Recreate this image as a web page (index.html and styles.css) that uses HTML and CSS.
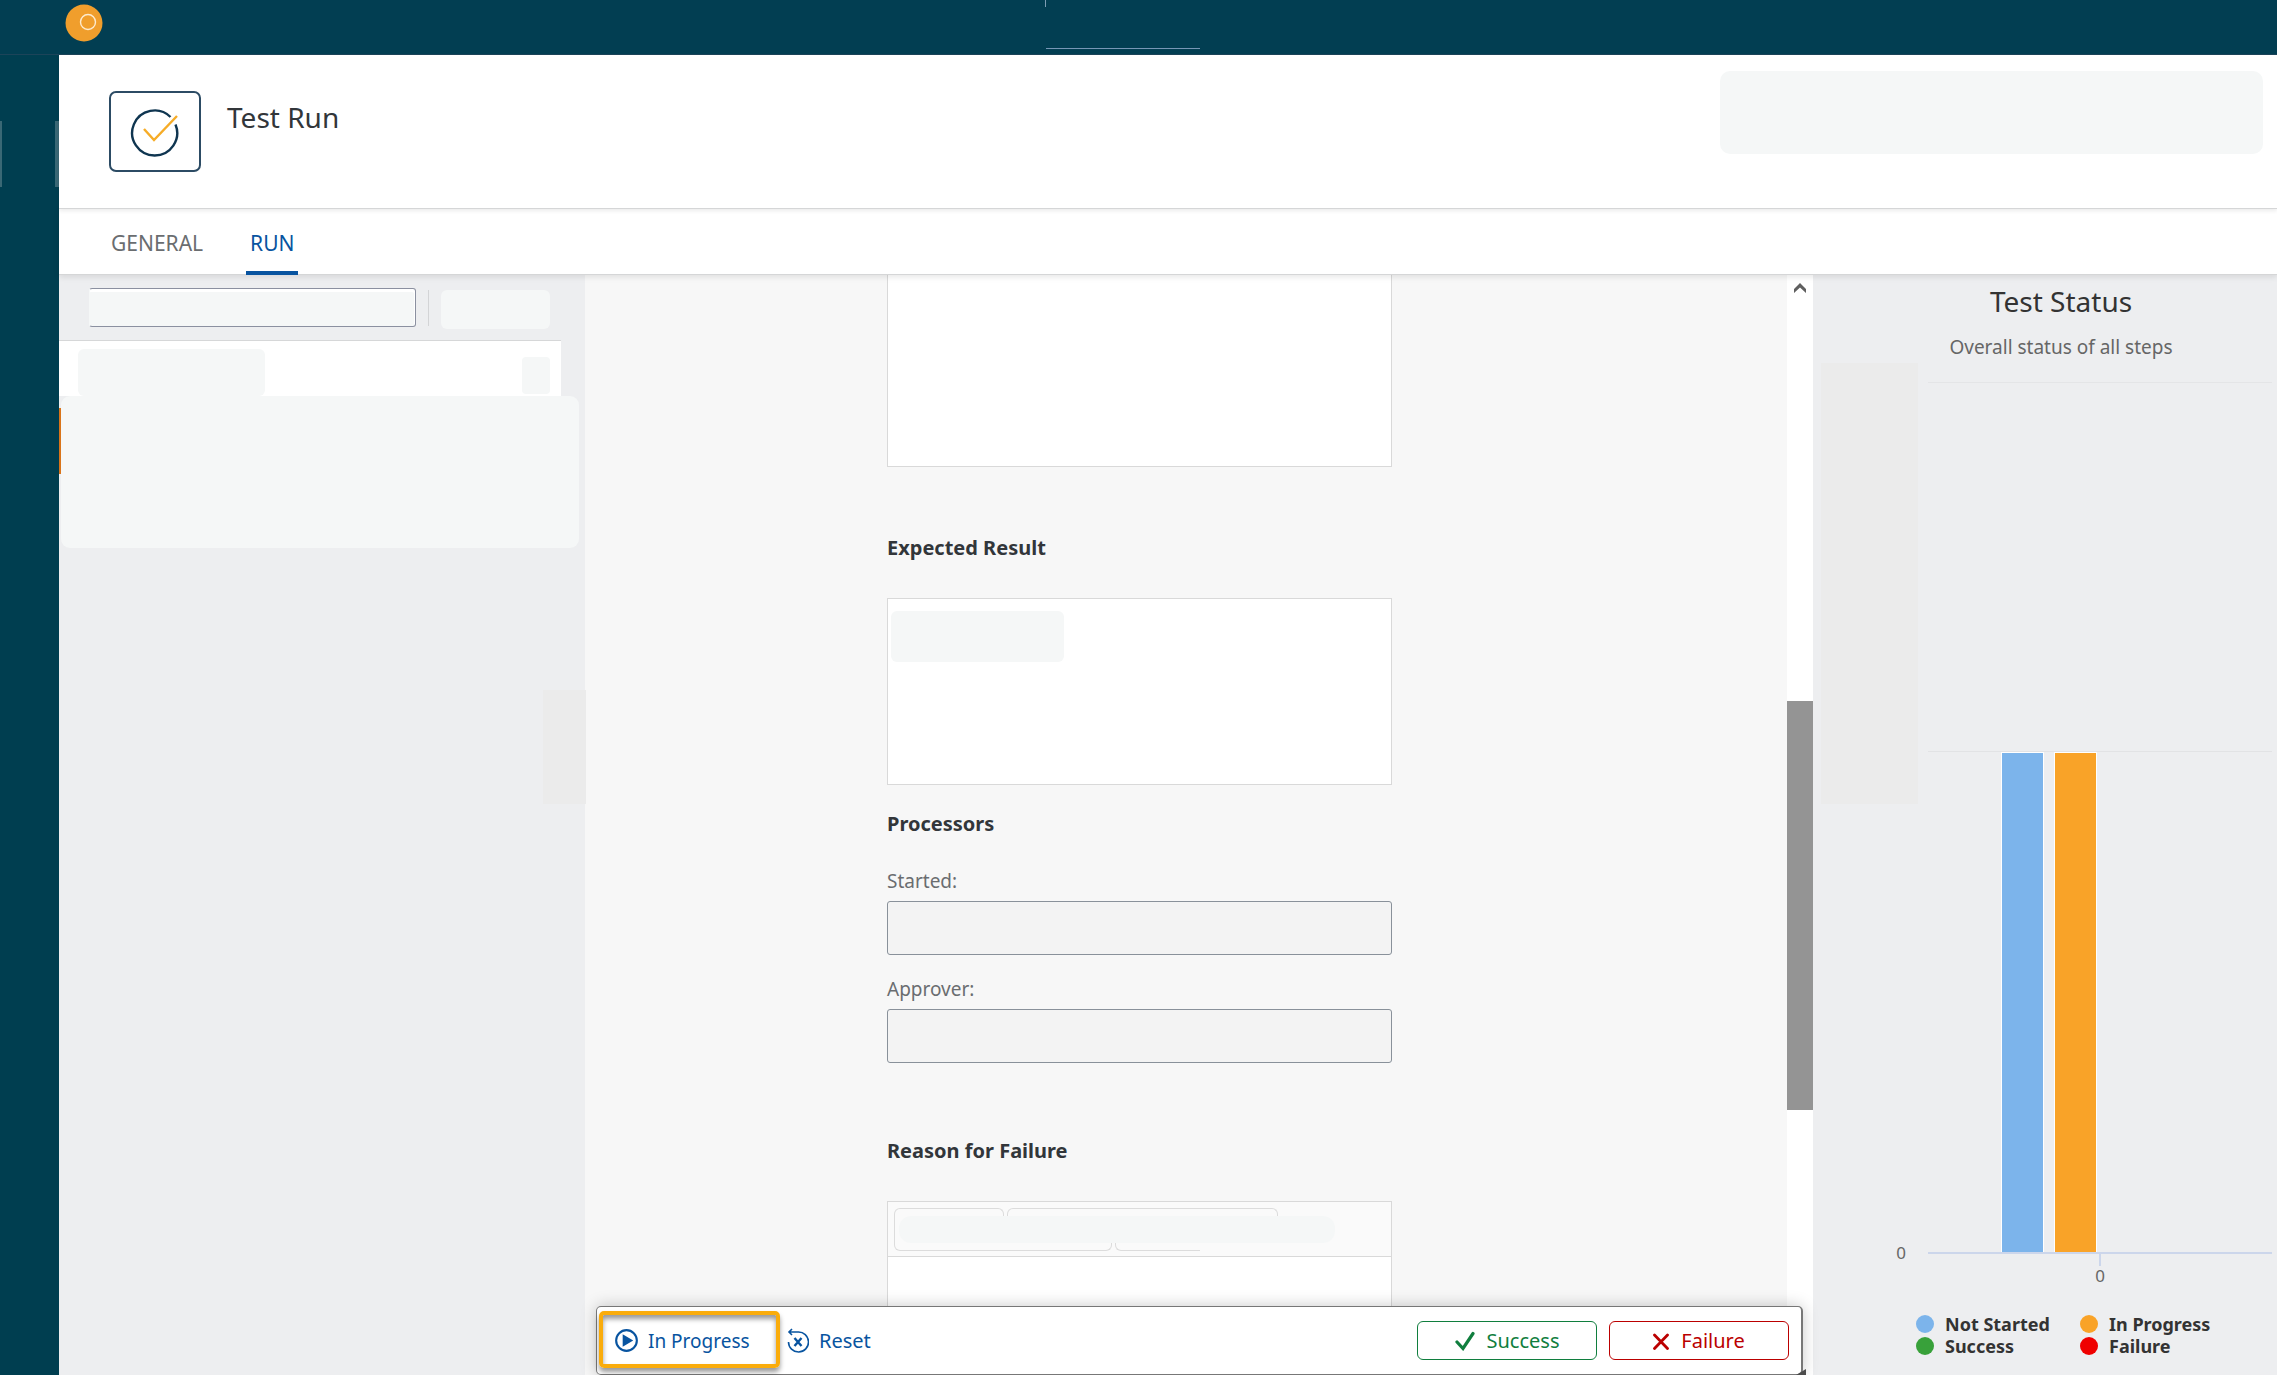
FILE: index.html
```html
<!DOCTYPE html>
<html lang="en">
<head>
<meta charset="utf-8">
<title>Test Run</title>
<link rel="stylesheet" href="styles.css">
</head>
<body>
<div class="shell">
  <header class="shell-bar">
    <svg class="brand" viewBox="0 0 38 38" aria-hidden="true">
      <circle cx="19" cy="19" r="18.5" fill="#f09e2c"/>
      <circle cx="23" cy="18" r="7.5" fill="none" stroke="#fdebcf" stroke-width="1.4"/>
    </svg>
    <div class="shell-search">
      <div class="shell-search-side"></div>
      <div class="shell-search-base"></div>
    </div>
  </header>

  <nav class="rail" aria-label="Main">
    <div class="rail-item"></div>
  </nav>

  <div class="page">
    <header class="page-header">
      <div class="object-icon">
        <svg viewBox="0 0 50 50" aria-hidden="true">
          <path d="M40.500 10A22.500 22.500 0 1 0 45.500 17.500" fill="none" stroke="#0f3550" stroke-width="2.400"/>
          <path d="M14 22l10 11L47 9" fill="none" stroke="#f6ac27" stroke-width="2.400"/>
        </svg>
      </div>
      <h1>Test Run</h1>
      <div class="mask header-mask"></div>
    </header>

    <nav class="tabs" aria-label="Sections">
      <a class="tab" href="#general">GENERAL</a>
      <a class="tab tab-active" href="#run" aria-current="page">RUN</a>
    </nav>

    <div class="columns">
      <aside class="steps">
        <div class="steps-toolbar">
          <input class="steps-search" type="text" aria-label="Search steps">
          <div class="divider"></div>
          <div class="mask action-mask"></div>
        </div>
        <div class="step-head">
          <div class="mask step-title-mask"></div>
          <div class="mask step-icon-mask"></div>
        </div>
        <div class="step-body">
          <div class="step-marker"></div>
          <div class="mask step-mask"></div>
        </div>
        <div class="grip"></div>
      </aside>

      <main class="main" id="run">
        <div class="form">
          <div class="form-column">
            <div class="box box-first"></div>
            <h2>Expected Result</h2>
            <div class="box box-expected"><div class="mask expected-mask"></div></div>
            <h2 class="tight">Processors</h2>
            <label for="started">Started:</label>
            <input class="field" id="started" type="text" readonly>
            <label for="approver">Approver:</label>
            <input class="field" id="approver" type="text" readonly>
            <h2 class="reason">Reason for Failure</h2>
            <div class="box editor">
              <div class="editor-toolbar">
                <div class="group-row group-row-top"><span class="group group-a"></span><span class="group group-b"></span></div>
                <div class="group-mid"><div class="mask editor-mask"></div></div>
                <div class="group-row group-row-bottom"><span class="group group-c"></span><span class="group group-d"></span></div>
              </div>
            </div>
          </div>
        </div>
        <div class="scrollbar">
          <svg class="scroll-up" viewBox="0 0 14 12" aria-hidden="true"><path d="M1 11V7l6-6 6 6v4L7 5.500z" fill="#5f5f5f"/></svg>
          <div class="scroll-thumb"></div>
        </div>
        <footer class="footer-bar">
          <button class="link-button highlighted" type="button">
            <svg class="play" viewBox="0 0 24 24" aria-hidden="true"><circle cx="12" cy="12" r="10.800" fill="none" stroke="#0854a0" stroke-width="2.200"/><path d="M8 5.500l11 6.500L8 18.500z" fill="#0854a0"/></svg>
            In Progress
          </button>
          <button class="link-button reset-button" type="button">
            <svg class="reset" viewBox="0 0 22 26" aria-hidden="true"><path d="M5 1L2 4l3 3M2 4h9a10 10 0 1 1-9.500 10" fill="none" stroke="#0854a0" stroke-width="1.600"/><path d="M7.500 10l7 8M14.500 10l-7 8" stroke="#0854a0" stroke-width="2.400"/></svg>
            Reset
          </button>
          <button class="outcome success" type="button">
            <svg viewBox="0 0 20 20" aria-hidden="true"><path d="M2 11l6 6.500L18 2.500" fill="none" stroke="currentColor" stroke-width="3.200" stroke-linecap="round"/></svg>
            Success
          </button>
          <button class="outcome failure" type="button">
            <svg class="cross" viewBox="0 0 16 20" aria-hidden="true"><path d="M1.500 4l13 13.500M14.500 4l-13 13.500" fill="none" stroke="currentColor" stroke-width="2.800" stroke-linecap="round"/></svg>
            Failure
          </button>
          <svg class="corner" viewBox="0 0 10 6" aria-hidden="true"><path d="M0 6L10 0v6z" fill="#4c4c4c"/></svg>
        </footer>
      </main>

      <aside class="status">
        <div class="status-head">
          <h2>Test Status</h2>
          <p>Overall status of all steps</p>
        </div>
        <div class="chart">
          <div class="y-axis">
            <div class="y-mask"></div>
            <span>0</span>
          </div>
          <div class="plot">
            <div class="plot-upper"></div>
            <div class="plot-lower">
              <div class="bar bar-not-started"></div>
              <div class="bar bar-in-progress"></div>
              <div class="bar bar-empty"></div>
              <div class="bar bar-empty"></div>
            </div>
            <div class="x-axis"><div class="tick"></div><span>0</span></div>
          </div>
        </div>
        <ul class="legend">
          <li><i class="dot not-started"></i>Not Started</li>
          <li><i class="dot in-progress"></i>In Progress</li>
          <li><i class="dot succeeded"></i>Success</li>
          <li><i class="dot failed"></i>Failure</li>
        </ul>
      </aside>
    </div>
  </div>
</div>
</body>
</html>
```

FILE: styles.css
```css
* { box-sizing: border-box; }

body {
  margin: 0;
  font-family: "Noto Sans", "Open Sans", sans-serif;
  font-size: 20px;
  line-height: 24px;
  color: #32363a;
  background: #edeef0;
}

h1, h2, p, ul { margin: 0; padding: 0; }
button, input { font: inherit; }

.shell {
  display: grid;
  grid-template: 55px minmax(0, 1fr) / 59px minmax(0, 1fr);
  height: 100vh;
  overflow: hidden;
}

.shell-bar {
  grid-column: 1 / -1;
  display: flex;
  align-items: flex-start;
  background: #023e52;
  border-bottom: 1px solid #1c4459;
}
.brand { width: 38px; height: 38px; margin: 4px 0 0 65px; }
.shell-search { width: 155px; margin-left: 942px; }
.shell-search-side { width: 1px; height: 7px; background: #7d9db4; }
.shell-search-base { height: 1px; margin: 41px 0 0 1px; background: #7796b5; }

.rail { background: #003e50; padding-top: 66px; }
.rail-item {
  height: 66px;
  border: solid #3a6875;
  border-width: 0 4px 0 2px;
}

.page { display: flex; flex-direction: column; min-width: 0; min-height: 0; }
.mask { background: #f5f7f7; border-radius: 6px; }

.page-header {
  display: flex;
  flex: none;
  height: 154px;
  padding: 16px 14px 0 50px;
  background: #fff;
  border-bottom: 1px solid #d5d6d7;
  box-shadow: 0 2px 4px rgba(0, 0, 0, .08);
  z-index: 3;
}
.object-icon {
  display: flex;
  align-items: center;
  justify-content: center;
  width: 92px;
  height: 81px;
  margin-top: 20px;
  border: 2px solid #2c4b64;
  border-radius: 7px;
}
.object-icon svg { width: 50px; height: 50px; }
h1 { margin: 28px 0 0 26px; font-size: 28px; line-height: 36px; font-weight: 400; }
.header-mask { width: 543px; height: 83px; margin-left: auto; border-radius: 10px; }

.tabs {
  display: flex;
  flex: none;
  gap: 39px;
  height: 66px;
  padding-left: 48px;
  background: #fff;
  border-bottom: 1px solid #d5d6d7;
  box-shadow: 0 2px 6px rgba(0, 0, 0, .1);
  z-index: 2;
}
.tab {
  height: 66px;
  padding: 22px 4px 0;
  font-size: 21px;
  color: #6a6d70;
  text-decoration: none;
  border-bottom: 4px solid transparent;
}
.tab-active { color: #0854a0; border-bottom-color: #0854a0; }

.columns {
  display: grid;
  grid-template-columns: 526px minmax(0, 1fr) 464px;
  flex: 1;
  min-height: 0;
}

.steps { position: relative; background: #edeef0; }
.steps-toolbar {
  display: flex;
  align-items: flex-start;
  width: 502px;
  height: 66px;
  padding: 13px 0 0 30px;
  border-bottom: 1px solid #d6d7d8;
}
.steps-search {
  width: 327px;
  height: 39px;
  border: 1px solid #8b90a0;
  border-left-color: #f5f7f7;
  border-radius: 3px;
  background: #f5f7f7;
  box-shadow: inset -1px 3px 0 #fff;
}
.divider { width: 1px; height: 36px; margin: 2px 12px 0; background: #d3d4d6; }
.action-mask { width: 109px; height: 39px; margin-top: 2px; }
.step-head {
  display: flex;
  justify-content: space-between;
  width: 502px;
  height: 55px;
  padding: 8px 11px 0 19px;
  background: #fff;
}
.step-title-mask { width: 187px; height: 47px; }
.step-icon-mask { width: 28px; height: 37px; margin-top: 8px; border-radius: 4px; }
.step-body { display: flex; }
.step-marker { width: 2px; height: 66px; margin-top: 12px; background: #d9741a; }
.step-mask { width: 518px; height: 152px; border-radius: 9px; }
.grip { position: absolute; right: -1px; top: 415px; width: 43px; height: 114px; background: #ebebeb; z-index: 1; }

.main { position: relative; display: flex; min-width: 0; min-height: 0; background: #f7f7f7; }
.form {
  display: grid;
  grid-template-columns: 302fr 505fr 395fr;
  flex: 1;
  overflow: hidden;
}
.form-column { grid-column: 2; display: flex; flex-direction: column; min-height: 0; }
.box { flex: none; background: #fff; border: 1px solid #d9d9d9; }
.box-first { height: 192px; border-top: 0; }
.form h2 { margin: 69px 0 38px; font-size: 20px; line-height: 24px; font-weight: 700; }
.box-expected { height: 187px; padding: 12px 3px; }
.expected-mask { width: 173px; height: 51px; }
.form h2.tight { margin: 27px 0 11px; }
.form h2.reason { margin-top: 76px; }
label { margin: 24px 0 10px; font-size: 19px; line-height: 20px; color: #6a6d70; }
.field {
  width: 100%;
  height: 54px;
  flex: none;
  padding: 0 12px;
  border: 1px solid #89919a;
  border-radius: 3px;
  background: #f3f3f3;
}
.editor { height: 220px; }
.editor-toolbar { height: 55px; padding: 6px; background: #fafafa; border-bottom: 1px solid #d9d9d9; }
.group-row { display: flex; gap: 3px; height: 8px; }
.group { border: 1px solid #dcdcdc; }
.group-row-top .group { border-bottom: 0; border-radius: 6px 6px 0 0; }
.group-row-bottom .group { border-top: 0; border-radius: 0 0 6px 6px; }
.group-row-top .group-a { width: 110px; }
.group-row-top .group-b { width: 271px; }
.group-row-bottom .group-c { width: 218px; }
.group-row-bottom .group-d { width: 85px; border-right: 0; border-bottom-right-radius: 0; }
.group-mid { border-left: 1px solid #dcdcdc; padding-left: 4px; }
.editor-mask { width: 436px; max-width: 100%; height: 27px; border-radius: 12px; }

.scrollbar { display: flex; flex-direction: column; align-items: center; width: 26px; padding-top: 7px; background: #fff; }
.scroll-up { width: 14px; height: 12px; }
.scroll-thumb { width: 26px; height: 409px; margin-top: 407px; background: #949494; }

.footer-bar {
  position: absolute;
  left: 11px;
  right: 10px;
  bottom: 0;
  display: flex;
  align-items: center;
  height: 69px;
  padding: 0 12px 0 2px;
  background: #fff;
  border: 1px solid #777;
  border-right-width: 2px;
  border-radius: 5px;
  box-shadow: 0 0 16px rgba(0, 0, 0, .22);
}
.link-button {
  display: flex;
  align-items: center;
  gap: 10px;
  padding: 0 8px;
  border: 0;
  background: none;
  color: #0854a0;
}
.highlighted {
  width: 181px;
  height: 57px;
  margin-bottom: 2px;
  padding: 2px 0 0 12px;
  font-size: 19px;
  border: 4px solid #faac0b;
  border-radius: 5px;
  box-shadow: 0 4px 5px rgba(0, 0, 0, .4), inset 0 4px 5px rgba(0, 0, 0, .4);
}
.reset-button { padding-left: 7px; }
.play { width: 23px; height: 23px; }
.reset { width: 22px; height: 26px; }
.outcome {
  display: flex;
  align-items: center;
  justify-content: center;
  gap: 12px;
  width: 180px;
  height: 39px;
  margin-left: 12px;
  padding: 0;
  background: #fff;
  border: 1px solid currentColor;
  border-radius: 6px;
}
.outcome svg { width: 20px; height: 20px; }
.outcome .cross { width: 16px; }
.success { margin-left: auto; color: #107e3e; }
.failure { color: #b00; }
.corner { position: absolute; right: -5px; bottom: -1px; width: 10px; height: 6px; }

.status { display: flex; flex-direction: column; background: #edeef0; color: #333; min-height: 0; }
.status-head { padding: 8px 0 0 32px; text-align: center; }
.status-head h2 { font-size: 28px; line-height: 36px; font-weight: 400; }
.status-head p { margin-top: 16px; font-size: 19px; line-height: 24px; color: #666; }
.chart {
  display: grid;
  grid-template-columns: 97px minmax(0, 1fr);
  column-gap: 10px;
  height: 922px;
  margin: 4px 5px 0 8px;
}
.y-axis { display: flex; flex-direction: column; align-items: flex-end; font-size: 17px; line-height: 20px; color: #666; }
.y-mask { align-self: stretch; height: 441px; background: #ebebeb; }
.y-axis span { margin: 439px 12px 0 0; }
.plot { display: grid; grid-template-rows: 369px 503px 1fr; padding-top: 19px; }
.plot-upper { border-top: 1px solid #e4e5e7; }
.plot-lower {
  display: flex;
  align-items: stretch;
  justify-content: center;
  gap: 10px;
  border-top: 1px solid #e2e3e5;
  border-bottom: 2px solid #ccd6eb;
}
.bar { width: 43px; border: 1px solid #fff; border-bottom: 0; }
.bar-not-started { background: #7cb4eb; }
.bar-in-progress { background: #f9a328; }
.bar-empty { width: 41px; height: 0; border: 0; }
.x-axis { display: flex; flex-direction: column; align-items: center; font-size: 17px; line-height: 20px; color: #666; }
.tick { width: 2px; height: 12px; background: #ccd6eb; }

.legend {
  display: grid;
  grid-template-columns: 164px auto;
  justify-content: start;
  margin: 28px 0 0 103px;
  list-style: none;
  font-size: 18px;
  line-height: 22px;
  font-weight: 700;
}
.legend li { display: flex; align-items: center; gap: 11px; }
.dot { width: 18px; height: 18px; border-radius: 50%; }
.not-started { background: #7cb4eb; }
.in-progress { background: #f9a328; }
.succeeded { background: #38a13a; }
.failed { background: #ef0000; }
```
